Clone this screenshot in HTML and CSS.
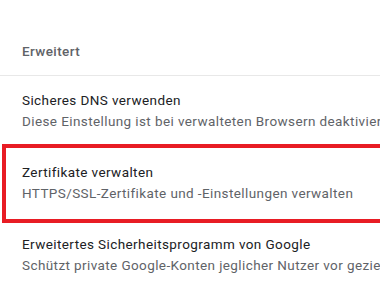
FILE: index.html
```html
<!DOCTYPE html>
<html lang="de">
<head>
  <meta charset="UTF-8">
  <meta name="viewport" content="width=device-width, initial-scale=1.0">
  <title>Sicherheit - Erweitert</title>
  <link rel="stylesheet" href="styles.css">
</head>
<body>
  <div class="section-header">Erweitert</div>

  <div class="setting-row">
    <div class="setting-title">Sicheres DNS verwenden</div>
    <div class="setting-desc">Diese Einstellung ist bei verwalteten Browsern deaktiviert</div>
  </div>

  <div class="setting-row highlighted">
    <div class="setting-title">Zertifikate verwalten</div>
    <div class="setting-desc">HTTPS/SSL-Zertifikate und -Einstellungen verwalten</div>
    <div class="highlight-box"></div>
  </div>

  <div class="setting-row">
    <div class="setting-title">Erweitertes Sicherheitsprogramm von Google</div>
    <div class="setting-desc">Schützt private Google-Konten jeglicher Nutzer vor gezielten Angriffen</div>
  </div>
</body>
</html>
```

FILE: styles.css
```css
body {
  font-family: Roboto, "Liberation Sans", sans-serif;
  font-size: 13.5px;
  letter-spacing: 0.4px;
  margin: 0;
  background: #fff;
  overflow: hidden;
}
.section-header {
  padding: 41px 0 14px 22px;
  line-height: 20px;
  font-weight: 500;
  color: #5f6368;
  border-bottom: 1px solid #e8e8e8;
}
.setting-row {
  position: relative;
  padding: 14px 0 16px 22px;
  white-space: nowrap;
  overflow: hidden;
  line-height: 21px;
}
.highlighted {
  overflow: visible;
}
.setting-title {
  color: #202124;
}
.setting-desc {
  color: #5f6368;
}
.highlight-box {
  position: absolute;
  top: -4px;
  bottom: -3px;
  left: 2px;
  right: -20px;
  border: 4px solid #e81c24;
}
```
